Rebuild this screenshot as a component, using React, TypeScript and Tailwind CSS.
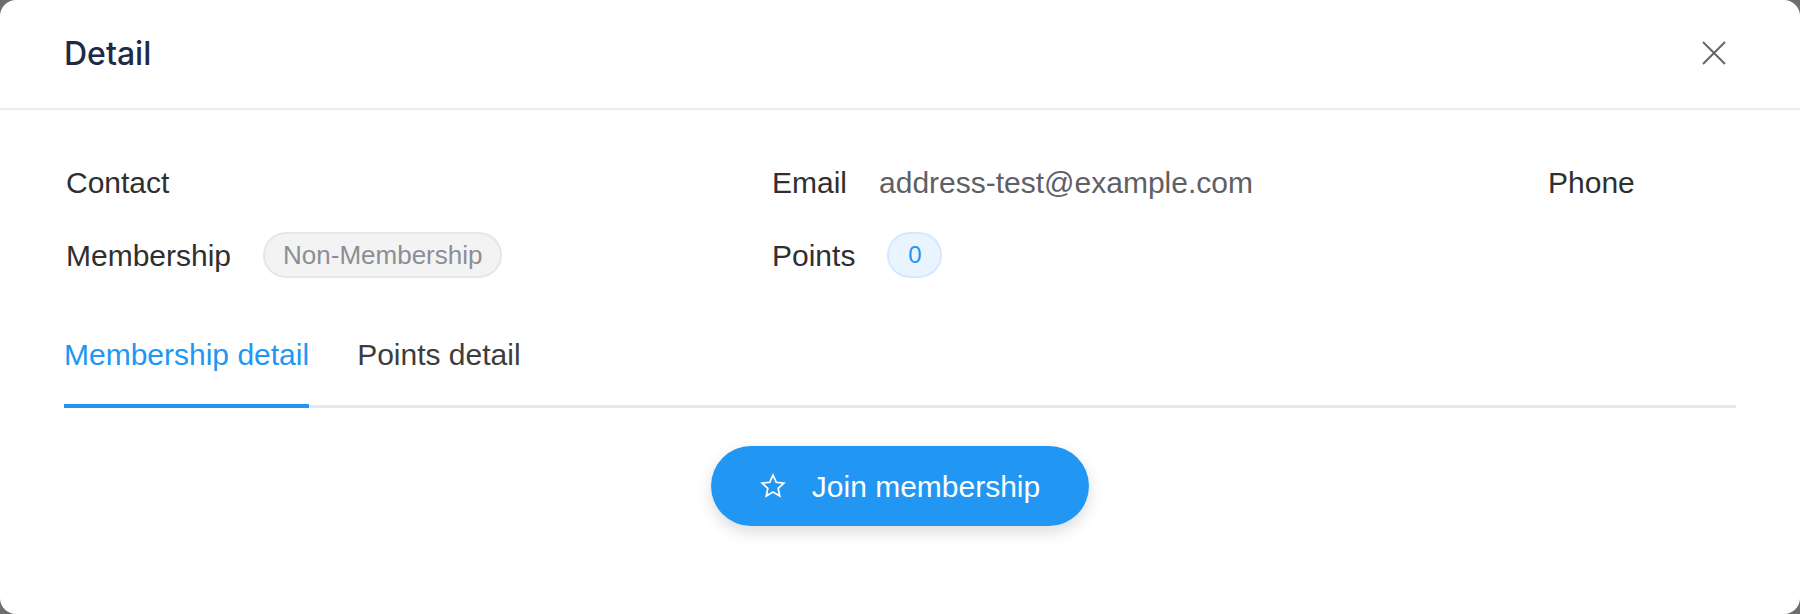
import { useState } from "react"

const BLUE = "text-[#2196f3]"

function CloseIcon() {
  return (
    <svg width="26" height="26" viewBox="0 0 26 26" fill="none" stroke="#666" strokeWidth="2">
      <path d="M2 2 L24 24 M24 2 L2 24" />
    </svg>
  )
}

function StarIcon() {
  return (
    <svg width="26" height="26" viewBox="0 0 24 24" fill="none" stroke="white" strokeWidth="1.6" strokeLinejoin="miter">
      <polygon points="12,2 15,8.6 22,9.4 16.8,14.2 18.2,21.2 12,17.6 5.8,21.2 7.2,14.2 2,9.4 9,8.6" />
    </svg>
  )
}

export default function App() {
  const [tab, setTab] = useState(0)
  const tabs = ["Membership detail", "Points detail"]

  return (
    <div className="h-[614px] w-full bg-[#6e6e6e]" style={{ fontFamily: '"Liberation Sans", Arial, sans-serif' }}>
      <div className="h-full rounded-[16px] bg-white">
        {/* Header */}
        <div className="h-[108px] flex items-center justify-between pl-[64px] pr-[73px]">
          <h2 className="text-[32px] font-medium text-[#1d2a48]" style={{ fontFamily: "Inter, sans-serif" }}>Detail</h2>
          <button className="mb-[3px]"><CloseIcon /></button>
        </div>
        <div className="h-[2px] bg-[#e9eef4]" />

        {/* Body */}
        <div className="px-[64px] pt-[49px]">
          <div className="grid grid-cols-[706px_776px_1fr] gap-y-[27px] pl-[2px] text-[30px] text-[#2f2f2f]">
            <div className="h-[46px] flex items-center">Contact</div>
            <div className="h-[46px] flex items-center gap-8">
              <span>Email</span>
              <span className="text-[#5f6066]">address-test@example.com</span>
            </div>
            <div className="h-[46px] flex items-center">Phone</div>

            <div className="h-[46px] flex items-center gap-8">
              <span>Membership</span>
              <span className="h-[46px] flex items-center rounded-full border-2 border-[#e6e6e8] bg-[#f3f3f4] px-[18px] text-[26px] text-[#8c8e94]">
                Non-Membership
              </span>
            </div>
            <div className="h-[46px] flex items-center gap-8">
              <span>Points</span>
              <span className={`h-[46px] w-[55px] flex items-center justify-center rounded-full border-2 border-[#d6e8fd] bg-[#eaf4ff] text-[24px] ${BLUE}`}>
                0
              </span>
            </div>
            <div />
          </div>

          {/* Tabs */}
          <div className="mt-[57px] flex gap-[48px] border-b-[3px] border-[#e3e7ef]">
            {tabs.map((t, i) => (
              <button
                key={t}
                onClick={() => setTab(i)}
                className={
                  "-mb-[3px] border-b-4 pb-[29px] text-[30px] leading-[40px] " +
                  (tab === i ? "border-[#2196f3] text-[#2196f3]" : "border-transparent text-[#3d3d3d]")
                }
              >
                {t}
              </button>
            ))}
          </div>

          <div className="mt-[38px] flex justify-center">
            <button className="h-[80px] flex items-center gap-[26px] rounded-full bg-[#2196f3] px-[49px] text-[30px] text-white shadow-[0_6px_16px_rgba(0,0,0,0.14)]">
              <StarIcon />
              <span>Join membership</span>
            </button>
          </div>
        </div>
      </div>
    </div>
  )
}
